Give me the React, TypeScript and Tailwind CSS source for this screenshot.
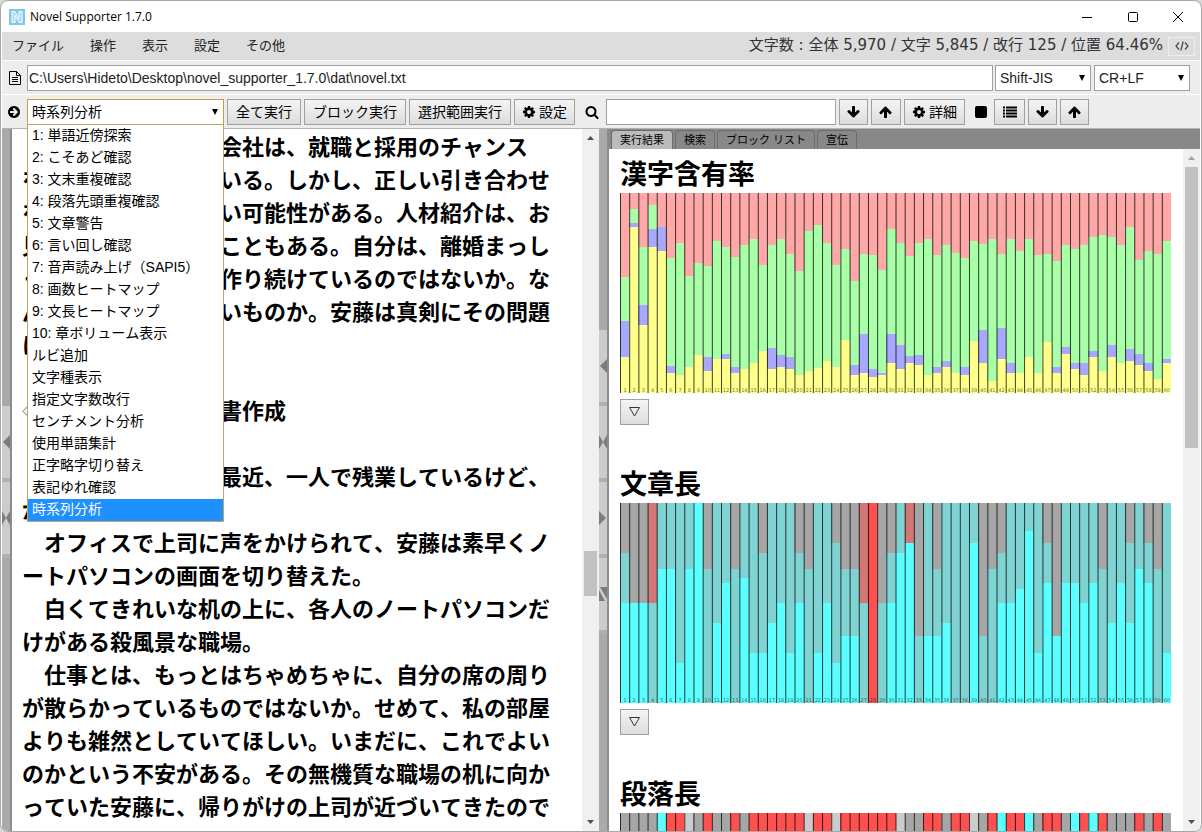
import { useState } from "react";
import type { ReactNode } from "react";

const menus = ["ファイル", "操作", "表示", "設定", "その他"];

const commands = [
  "1: 単語近傍探索",
  "2: こそあど確認",
  "3: 文末重複確認",
  "4: 段落先頭重複確認",
  "5: 文章警告",
  "6: 言い回し確認",
  "7: 音声読み上げ（SAPI5）",
  "8: 画数ヒートマップ",
  "9: 文長ヒートマップ",
  "10: 章ボリューム表示",
  "ルビ追加",
  "文字種表示",
  "指定文字数改行",
  "センチメント分析",
  "使用単語集計",
  "正字略字切り替え",
  "表記ゆれ確認",
  "時系列分析",
];

const tabs = ["実行結果", "検索", "ブロック リスト", "宣伝"];

const novel = [
  "　安藤が勤める紹介会社は、就職と採用のチャンス",
  "を人々に与え続けている。しかし、正しい引き合わせ",
  "を正しく行えていない可能性がある。人材紹介は、お",
  "見合いに喩えられることもある。自分は、離婚まっし",
  "ぐらの夫婦ばかりを作り続けているのではないか。な",
  "んとも救いようのないものか。安藤は真剣にその問題",
  "に悩んでいた。",
  "",
  "◇　第二章の企画文書作成",
  "",
  "　「安藤くんさあ、最近、一人で残業しているけど、",
  "が終わらないのか」",
  "　オフィスで上司に声をかけられて、安藤は素早くノ",
  "ートパソコンの画面を切り替えた。",
  "　白くてきれいな机の上に、各人のノートパソコンだ",
  "けがある殺風景な職場。",
  "　仕事とは、もっとはちゃめちゃに、自分の席の周り",
  "が散らかっているものではないか。せめて、私の部屋",
  "よりも雑然としていてほしい。いまだに、これでよい",
  "のかという不安がある。その無機質な職場の机に向か",
  "っていた安藤に、帰りがけの上司が近づいてきたので",
];

// where each colour ends, from the top, out of 200
const kanjiRatio = [
  [84, 128, 164], [16, 30, 34], [54, 112, 132], [12, 36, 54], [34, 34, 58], [65, 173, 180],
  [50, 182, 182], [83, 174, 174], [70, 162, 162], [73, 164, 178], [48, 166, 166], [54, 161, 166],
  [64, 174, 180], [52, 176, 176], [46, 170, 170], [72, 158, 158], [52, 155, 176], [46, 162, 174],
  [61, 164, 176], [78, 182, 182], [38, 178, 178], [32, 175, 175], [50, 168, 168], [72, 174, 174],
  [56, 147, 147], [88, 172, 182], [61, 141, 180], [62, 176, 184], [77, 180, 182], [36, 141, 170],
  [50, 152, 176], [63, 163, 170], [50, 162, 172], [46, 182, 182], [62, 174, 180], [52, 168, 174],
  [60, 180, 180], [65, 174, 182], [48, 148, 148], [51, 137, 170], [46, 188, 188], [61, 135, 166],
  [46, 170, 180], [58, 180, 180], [46, 164, 164], [62, 180, 180], [61, 149, 149], [68, 174, 180],
  [52, 154, 161], [56, 170, 176], [52, 170, 182], [44, 158, 164], [42, 178, 178], [44, 152, 164],
  [52, 170, 170], [34, 156, 168], [67, 161, 172], [58, 170, 178], [61, 186, 186], [48, 166, 170],
];

// gray end, teal end
const sentenceLength = [
  [50, 100], [100, 100], [100, 100], [100, 200], [0, 66], [0, 66], [0, 160], [0, 66], [0, 0], [66, 200],
  [0, 120], [0, 80], [66, 200], [0, 75], [0, 150], [50, 150], [0, 120], [0, 100], [0, 150], [50, 100],
  [66, 200], [0, 150], [0, 100], [40, 160], [66, 133], [66, 133], [100, 200], [200, 200], [100, 200], [50, 100],
  [0, 50], [40, 40], [133, 200], [0, 133], [66, 133], [0, 120], [0, 200], [0, 200], [0, 40], [133, 200],
  [66, 200], [50, 100], [0, 100], [0, 86], [0, 28], [0, 150], [40, 80], [133, 133], [0, 80], [0, 80],
  [0, 100], [0, 80], [66, 200], [0, 120], [0, 80], [40, 120], [0, 66], [40, 80], [66, 200], [0, 150],
];

const paragraphLength = "GGGGCRRLGRGGRGRRRRRRLRRLRRRRRRLGGRRGRRLGRCRRCGRRGCRCRGGGRGRG";

type Segment = { end: number; color: string };

const warnColors: Record<number, string> = { 3: "#d37676", 26: "#d37676", 27: "#ff5050", 31: "#d37676" };
const paragraphColors: Record<string, string> = { G: "#a6a6a6", C: "#5cffff", R: "#ff5050", L: "#cccccc" };

const charts: { title: string; bars: Segment[][] }[] = [
  {
    title: "漢字含有率",
    bars: kanjiRatio.map(([a, b, c]) => [
      { end: a, color: "#ffa8a8" },
      { end: b, color: "#a8ffa8" },
      { end: c, color: "#a8a8ff" },
      { end: 200, color: "#ffff8c" },
    ]),
  },
  {
    title: "文章長",
    bars: sentenceLength.map(([a, b], i) => [
      { end: a, color: warnColors[i] ?? "#a6a6a6" },
      { end: b, color: "#80d3d3" },
      { end: 200, color: "#5cffff" },
    ]),
  },
  {
    title: "段落長",
    bars: paragraphLength.split("").map((k) => [{ end: 200, color: paragraphColors[k] }]),
  },
];

const paths = {
  down: "M1611 832q0 53-37 90l-651 652q-39 37-91 37-53 0-90-37l-651-652q-38-36-38-90 0-53 38-91l74-75q39-37 91-37 53 0 90 37l294 294v-704q0-52 38-90t90-38h128q52 0 90 38t38 90v704l294-294q37-37 90-37 52 0 91 37l75 75q37 39 37 91z",
  up: "M1611 971q0 51-37 90l-75 75q-38 38-91 38-54 0-90-38l-294-293v704q0 52-37.5 84.5t-90.5 32.5h-128q-53 0-90.5-32.5t-37.5-84.5v-704l-294 293q-36 38-90 38t-90-38l-75-75q-38-38-38-90 0-53 38-91l651-651q35-37 90-37 54 0 91 37l651 651q37 39 37 91z",
  cog: "M1152 896q0-106-75-181t-181-75-181 75-75 181 75 181 181 75 181-75 75-181zm512-109v222q0 12-8 23t-20 13l-185 28q-19 54-39 91 35 50 107 138 10 12 10 25t-9 23q-27 37-99 108t-94 71q-12 0-26-9l-138-108q-44 23-91 38-16 136-29 186-7 28-36 28h-222q-14 0-24.5-8.5t-11.5-21.5l-28-184q-49-16-90-37l-141 107q-10 9-25 9-14 0-25-11-126-114-165-168-7-10-7-23 0-12 8-23 15-21 51-66.5t54-70.5q-27-50-41-99l-183-27q-13-2-21-12.5t-8-23.5v-222q0-12 8-23t19-13l186-28q14-46 39-92-40-57-107-138-10-12-10-24 0-10 9-23 26-36 98.5-107.5t94.5-71.5q13 0 26 10l138 107q44-23 91-38 16-136 29-186 7-28 36-28h222q14 0 24.5 8.5t11.5 21.5l28 184q49 16 90 37l142-107q9-9 24-9 13 0 25 10 129 119 165 170 7 8 7 22 0 12-8 23-15 21-51 66.5t-54 70.5q26 50 41 98l183 28q13 2 21 12.5t8 23.5z",
  search: "M1216 832q0-185-131.5-316.5t-316.5-131.5-316.5 131.5-131.5 316.5 131.5 316.5 316.5 131.5 316.5-131.5 131.5-316.5zm512 832q0 52-38 90t-90 38q-54 0-90-38l-343-342q-179 124-399 124-143 0-273.5-55.5t-225-150-150-225-55.5-273.5 55.5-273.5 150-225 225-150 273.5-55.5 273.5 55.5 225 150 150 225 55.5 273.5q0 220-124 399l343 343q37 37 37 90z",
  go: "M1413 896q0-27-18-45l-91-91-362-362q-18-18-45-18t-45 18l-91 91q-18 18-18 45t18 45l189 189h-502q-26 0-45 19t-19 45v128q0 26 19 45t45 19h502l-189 189q-19 19-19 45t19 45l91 91q18 18 45 18t45-18l362-362 91-91q18-18 18-45zm251 0q0 209-103 385.5t-279.5 279.5-385.5 103-385.5-103-279.5-279.5-103-385.5 103-385.5 279.5-279.5 385.5-103 385.5 103 279.5 279.5 103 385.5z",
  list: "M0 192h256v256H0zM384 192h1408v256H384zM0 576h256v256H0zM384 576h1408v256H384zM0 960h256v256H0zM384 960h1408v256H384zM0 1344h256v256H0zM384 1344h1408v256H384z",
};

function Icon({ name, className = "size-[14px]" }: { name: keyof typeof paths; className?: string }) {
  return (
    <svg viewBox="0 0 1792 1792" className={`shrink-0 ${className}`} fill="currentColor" aria-hidden="true">
      <path d={paths[name]} />
    </svg>
  );
}

function ToolButton({ label, children, className = "px-2" }: { label?: string; children: ReactNode; className?: string }) {
  return (
    <button
      aria-label={label}
      className={`flex h-[26px] shrink-0 items-center justify-center gap-[3px] whitespace-nowrap border border-[#a0a0a0] bg-linear-to-b from-[#f4f4f4] to-[#dddddd] text-sm leading-none ${className}`}
    >
      {children}
    </button>
  );
}

function Select({ label, options, className, border = "border-[#a0a0a0]" }: { label: string; options: string[]; className: string; border?: string }) {
  return (
    <div className={`relative h-[26px] shrink-0 ${className}`}>
      <select
        aria-label={label}
        defaultValue={options[options.length - 1]}
        className={`h-full w-full appearance-none border bg-white px-1 text-sm leading-none outline-none ${border}`}
      >
        {options.map((o) => (
          <option key={o}>{o}</option>
        ))}
      </select>
      <svg viewBox="0 0 6 6" className="pointer-events-none absolute top-[10px] right-[6px] size-[6px]" aria-hidden="true">
        <path d="M0 0h6L3 6z" />
      </svg>
    </div>
  );
}

function Splitter({ marks }: { marks: string[] }) {
  return (
    <div className="flex w-[10px] shrink-0 flex-col border-r-2 border-[#8c8c8c] bg-[#aaaaaa] pt-[3px]">
      <div className="flex-1" />
      {marks.map((d, i) => (
        <div key={i} className="flex h-[76px] items-center border-b-4 border-[#b0b0b0] bg-[#cccccc] last:border-b-0">
          <svg viewBox="0 0 8 14" className="h-[14px] w-2 fill-[#7c7c7c]" aria-hidden="true">
            <path d={d} />
          </svg>
        </div>
      ))}
      <div className="flex-1" />
    </div>
  );
}

function Scrollbar({ children, active }: { children: ReactNode; active?: boolean }) {
  return (
    <div className="flex w-[17px] shrink-0 flex-col items-center bg-[#f0f0f0]">
      <svg viewBox="0 0 7 4" className={`my-[7px] h-1 w-[7px] shrink-0 ${active ? "fill-[#505050]" : "fill-[#a3a3a3]"}`} aria-hidden="true">
        <path d="M0 4h7L3.500 0z" />
      </svg>
      <div className="flex w-[13px] flex-1 flex-col">{children}</div>
      <svg viewBox="0 0 7 4" className="my-[7px] h-1 w-[7px] shrink-0 fill-[#505050]" aria-hidden="true">
        <path d="M0 0h7L3.500 4z" />
      </svg>
    </div>
  );
}

function BarChart({ title, bars }: { title: string; bars: Segment[][] }) {
  const pitch = 551 / bars.length;
  return (
    <svg viewBox="0 0 551 200" width="551" height="200" role="img" aria-label={title} className="block shrink-0">
      {bars.map((segments, i) => (
        <g key={i}>
          {segments.map((s, j) => {
            const top = j === 0 ? 0 : segments[j - 1].end;
            return s.end > top ? (
              <rect key={j} x={i * pitch} y={top} width={pitch} height={s.end - top} fill={s.color} shapeRendering="crispEdges" />
            ) : null;
          })}
          <rect x={i * pitch} y="0" width="1" height="200" fill="#000000" fillOpacity="0.75" />
          <text x={i * pitch + 5} y="199" fontSize="5" textAnchor="middle" fillOpacity="0.6" fontFamily="DejaVu Sans, sans-serif">
            {i + 1}
          </text>
        </g>
      ))}
    </svg>
  );
}

export default function App() {
  const [tab, setTab] = useState(0);
  const [command, setCommand] = useState(commands.length - 1);

  return (
    <div className="h-screen bg-[#d8d8d8] font-['Liberation_Sans','Noto_Sans_CJK_JP',sans-serif] text-[#222222] [font-kerning:none] [text-spacing-trim:space-all]">
      <div className="flex h-full flex-col overflow-hidden rounded-lg border border-[#a8a8a8] bg-white px-px">
        {/* Title bar */}
        <header className="flex h-[31px] shrink-0 items-center pl-[7px]">
          <svg viewBox="0 0 16 16" className="size-4" aria-hidden="true">
            <path d="M0 0h16v16H0z" fill="#7fc8ec" />
            <path d="M3 13.500V2.500h3l4 7v-7h3v11h-3l-4-7v7z" fill="#a9dcf5" stroke="#ffffff" strokeWidth="1" />
          </svg>
          <h1 className="ml-[5px] flex-1 font-['Open_Sans',sans-serif] text-xs text-black">Novel Supporter 1.7.0</h1>
          <button aria-label="最小化" className="flex h-full w-[46px] items-center justify-center">
            <svg viewBox="0 0 10 10" className="size-[10px]"><path d="M0 5.500h10" stroke="#000" /></svg>
          </button>
          <button aria-label="最大化" className="flex h-full w-[46px] items-center justify-center">
            <svg viewBox="0 0 10 10" className="size-[10px]"><rect x="0.500" y="0.500" width="9" height="9" rx="1" fill="none" stroke="#000" /></svg>
          </button>
          <button aria-label="閉じる" className="flex h-full w-[44px] items-center justify-center">
            <svg viewBox="0 0 10 10" className="size-[10px]"><path d="M0 0l10 10M10 0L0 10" stroke="#000" /></svg>
          </button>
        </header>

        {/* Menu bar */}
        <nav className="flex h-[29px] shrink-0 items-center border-b border-white bg-[#dddddd] pr-[5px] pl-[10px]">
          <div className="flex flex-1 gap-[26px] text-[13px]">
            {menus.map((m) => (
              <button key={m}>{m}</button>
            ))}
          </div>
          <p className="mr-[5px] pb-0.5 font-['DejaVu_Sans','Noto_Sans_CJK_JP',sans-serif] text-[15px] leading-5 text-[#333333]">
            文字数 : 全体 5,970 / 文字 5,845 / 改行 125 / 位置 64.46%
          </p>
          <button aria-label="開発者ツール" className="flex h-[19px] w-[27px] items-center justify-center border border-[#eeeeee] text-[#444444]">
            <svg viewBox="0 0 14 10" className="h-[10px] w-[14px]" fill="none" stroke="currentColor" strokeWidth="1.200">
              <path d="M4 1.500L1 5l3 3.500M10 1.500L13 5l-3 3.500M8.200 0.500l-2.400 9" />
            </svg>
          </button>
        </nav>

        {/* File path */}
        <div className="flex h-[34px] shrink-0 items-center border-b border-white bg-[#ededed] pr-[10px] pl-[7px]">
          <svg viewBox="0 0 12 14" className="mr-[6px] h-[14px] w-3 shrink-0" fill="none" stroke="#000" aria-hidden="true">
            <path d="M0.500 0.500h7l4 4v9h-11zM7.500 0.500v4h4M3 6.500h6M3 8.500h6M3 10.500h6" />
          </svg>
          <input
            aria-label="ファイルパス"
            defaultValue="C:\Users\Hideto\Desktop\novel_supporter_1.7.0\dat\novel.txt"
            className="h-[26px] min-w-0 flex-1 border border-[#a0a0a0] bg-white px-px text-sm outline-none"
          />
          <Select label="文字コード" options={["Shift-JIS"]} className="ml-0.5 w-24" />
          <Select label="改行コード" options={["CR+LF"]} className="ml-[3px] w-24" />
        </div>

        {/* Tool bar */}
        <div className="flex h-[34px] shrink-0 items-center gap-[3px] border-b border-[#b4b4b4] bg-[#ededed] pl-[5px] text-black">
          <Icon name="go" className="mr-[3px] size-[14px]" />
          <div className="relative">
            <Select key={command} label="コマンド" options={[commands[command]]} className="w-[197px]" border="border-[#cc9a40]" />
            <ul role="listbox" aria-label="コマンド一覧" className="absolute top-[25px] left-0 z-10 w-[197px] border border-[#c0a468] bg-white text-sm">
              {commands.map((c, i) => (
                <li
                  key={c}
                  role="option"
                  aria-selected={i === command}
                  onClick={() => setCommand(i)}
                  className={`h-[22px] px-1 leading-[20px] ${i === command ? "bg-[#1e90ff] text-white" : ""}`}
                >
                  {c}
                </li>
              ))}
            </ul>
          </div>
          <ToolButton>全て実行</ToolButton>
          <ToolButton>ブロック実行</ToolButton>
          <ToolButton>選択範囲実行</ToolButton>
          <ToolButton className="px-[7px]">
            <Icon name="cog" />
            設定
          </ToolButton>
          <Icon name="search" className="mr-1 ml-[7px] size-[14px]" />
          <input aria-label="検索" className="h-[26px] w-[230px] border border-[#a0a0a0] bg-white px-1 text-sm outline-none" />
          <ToolButton label="次を検索" className="w-[29px]"><Icon name="down" /></ToolButton>
          <ToolButton label="前を検索" className="w-[30px]"><Icon name="up" /></ToolButton>
          <ToolButton className="px-[7px]">
            <Icon name="cog" />
            詳細
          </ToolButton>
          <span className="mr-1 ml-[7px] size-3 rounded-xs bg-black" />
          <ToolButton label="一覧" className="w-[31px]"><Icon name="list" /></ToolButton>
          <ToolButton label="次へ" className="w-[29px]"><Icon name="down" /></ToolButton>
          <ToolButton label="前へ" className="w-[29px]"><Icon name="up" /></ToolButton>
        </div>

        {/* Editor and results */}
        <main className="flex min-h-0 flex-1 text-black">
          <Splitter marks={["M8 0v14L1 7z", "M0 0l4 7-4 7zM8 0L4 7l4 7z"]} />
          <section className="flex min-w-0 flex-[587] overflow-hidden">
            <div className="min-w-0 flex-1 overflow-hidden pt-0.5 pl-[10px] text-[22px] leading-[33px] font-bold whitespace-nowrap">
              {novel.map((line, i) => (
                <p key={i} className={`h-[33px] ${line.startsWith("◇") ? "first-letter:font-normal first-letter:text-[#888888]" : ""}`}>
                  {line}
                </p>
              ))}
            </div>
            <Scrollbar active>
              <div className="flex-[405]" />
              <div className="h-[45px] bg-[#c1c1c1]" />
              <div className="flex-[218]" />
            </Scrollbar>
          </section>
          <Splitter
            marks={["M8 0v14L1 7z", "M0 0l4 7-4 7zM8 0L4 7l4 7z", "M0 0v14l7-7z", "M0 3v11h6zM1 0h7v12z"]}
          />
          <section className="flex min-w-0 flex-[591] flex-col">
            <div role="tablist" className="flex h-5 shrink-0 items-end gap-0.5 bg-[#888888] pl-0.5">
              {tabs.map((t, i) => (
                <button
                  key={t}
                  role="tab"
                  aria-selected={i === tab}
                  onClick={() => setTab(i)}
                  className={`h-[19px] rounded-t border border-b-0 border-[#6c6c6c] px-2 text-[11px] leading-none ${i === tab ? "bg-[#bbbbbb]" : "bg-[#888888]"}`}
                >
                  {t}
                </button>
              ))}
            </div>
            <div className="flex min-h-0 flex-1">
              <div className="min-w-0 flex-1 overflow-hidden pt-2 pl-[11px]">
                {charts.map((c) => (
                  <article key={c.title} className="mb-[42px]">
                    <h2 className="h-9 text-[27px] leading-9 font-bold">{c.title}</h2>
                    <BarChart title={c.title} bars={c.bars} />
                    <ToolButton label={`${c.title}の詳細`} className="mt-[6px] w-[29px]">
                      <svg viewBox="0 0 11 10" className="h-[10px] w-[11px]" fill="none" stroke="#333333" aria-hidden="true">
                        <path d="M0.500 0.500h10L5.500 9z" />
                      </svg>
                    </ToolButton>
                  </article>
                ))}
              </div>
              <Scrollbar>
                <div className="h-[281px] bg-[#c1c1c1]" />
              </Scrollbar>
            </div>
          </section>
        </main>
      </div>
    </div>
  );
}
